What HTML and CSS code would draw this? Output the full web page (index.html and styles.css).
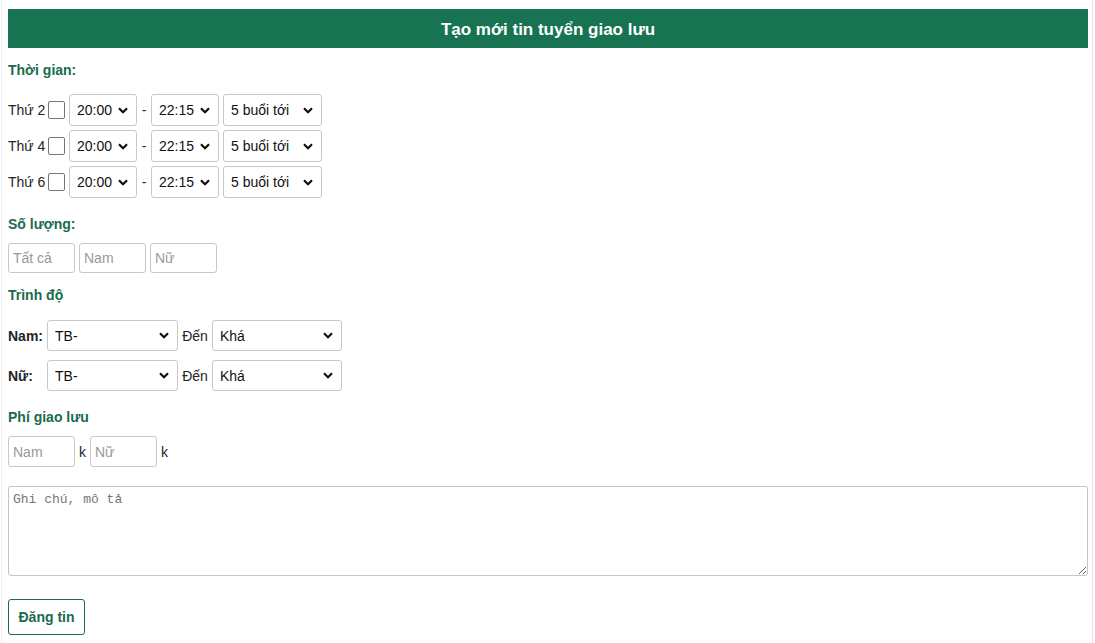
FILE: index.html
```html
<!DOCTYPE html>
<html lang="vi">
<head>
<meta charset="utf-8">
<title>Tạo mới tin tuyển giao lưu</title>
<link rel="stylesheet" href="styles.css">
</head>
<body>
<div class="frame">
  <div class="title">Tạo mới tin tuyển giao lưu</div>

  <div class="label l-time">Thời gian:</div>
  <div class="time-rows">
    <div class="time-row">
      <span class="day">Thứ 2</span><span class="check"></span>
      <select class="sel sel-time"><option>20:00</option></select>
      <span class="dash">-</span>
      <select class="sel sel-time"><option>22:15</option></select>
      <select class="sel sel-count"><option>5 buổi tới</option></select>
    </div>
    <div class="time-row">
      <span class="day">Thứ 4</span><span class="check"></span>
      <select class="sel sel-time"><option>20:00</option></select>
      <span class="dash">-</span>
      <select class="sel sel-time"><option>22:15</option></select>
      <select class="sel sel-count"><option>5 buổi tới</option></select>
    </div>
    <div class="time-row">
      <span class="day">Thứ 6</span><span class="check"></span>
      <select class="sel sel-time"><option>20:00</option></select>
      <span class="dash">-</span>
      <select class="sel sel-time"><option>22:15</option></select>
      <select class="sel sel-count"><option>5 buổi tới</option></select>
    </div>
  </div>

  <div class="label l-qty">Số lượng:</div>
  <div class="qty-row">
    <input class="inp" placeholder="Tất cả">
    <input class="inp" placeholder="Nam">
    <input class="inp" placeholder="Nữ">
  </div>

  <div class="label l-level">Trình độ</div>
  <div class="level-rows">
    <div class="level-row">
      <span class="who">Nam:</span>
      <select class="sel sel-level"><option>TB-</option></select>
      <span class="to">Đến</span>
      <select class="sel sel-level2"><option>Khá</option></select>
    </div>
    <div class="level-row">
      <span class="who">Nữ:</span>
      <select class="sel sel-level"><option>TB-</option></select>
      <span class="to">Đến</span>
      <select class="sel sel-level2"><option>Khá</option></select>
    </div>
  </div>

  <div class="label l-fee">Phí giao lưu</div>
  <div class="fee-row">
    <input class="inp fee" placeholder="Nam"><span class="k">k</span>
    <input class="inp fee" placeholder="Nữ"><span class="k">k</span>
  </div>

  <textarea class="note" placeholder="Ghi chú, mô tả"></textarea>

  <div class="actions"><button class="btn">Đăng tin</button></div>
</div>
</body>
</html>
```

FILE: styles.css
```css
* { box-sizing: border-box; }
html, body { margin: 0; padding: 0; background: #fff; }
body {
  font-family: "Liberation Sans", Arial, sans-serif;
  font-size: 14px;
  color: #212529;
}
.frame {
  margin: 0 2px 0 1px;
  border-left: 1px solid #f0f0f0;
  border-right: 1px solid #e4e4e4;
  padding: 9px 4px 0 6px;
  min-height: 643px;
  display: flex;
  flex-direction: column;
  align-items: flex-start;
}
.title {
  align-self: stretch;
  height: 39px;
  padding-top: 3px;
  background: #177352;
  color: #fff;
  font-weight: bold;
  font-size: 17px;
  display: flex;
  align-items: center;
  justify-content: center;
}
.label {
  color: #1a6b4d;
  font-weight: bold;
  font-size: 14px;
  line-height: 20px;
  height: 20px;
}
.l-time { margin-top: 12px; }
.time-rows { margin-top: 14px; display: flex; flex-direction: column; gap: 4px; }
.time-row { display: flex; align-items: center; height: 32px; }
.day { width: 40px; font-size: 14px; }
.check {
  width: 17px; height: 18px;
  border: 1px solid #767676;
  border-radius: 2px;
  background: #fff;
  margin-right: 4px;
}
.sel {
  appearance: none;
  -webkit-appearance: none;
  font-family: "Liberation Sans", Arial, sans-serif;
  font-size: 14px;
  color: #111;
  background-color: #fff;
  background-image: url("data:image/svg+xml;utf8,<svg xmlns='http://www.w3.org/2000/svg' width='10' height='7' viewBox='0 0 10 7'><path d='M1 1.3l4 4 4-4' fill='none' stroke='%23111' stroke-width='2.2'/></svg>");
  background-repeat: no-repeat;
  background-position: right 8px center;
  border: 1px solid #c8c8c8;
  border-radius: 3px;
  padding: 0 20px 0 7px;
  margin: 0;
}
.sel-time { width: 68px; height: 32px; }
.sel-count { width: 99px; height: 32px; margin-left: 4px; }
.dash { width: 14px; text-align: center; }
.l-qty { margin-top: 16px; }
.qty-row { margin-top: 9px; display: flex; gap: 4px; }
.inp {
  font-family: "Liberation Sans", Arial, sans-serif;
  font-size: 14px;
  color: #212529;
  width: 67px; height: 30px;
  border: 1px solid #c8c8c8;
  border-radius: 3px;
  padding: 0 4px;
  margin: 0;
  outline: none;
}
.inp::placeholder { color: #999; }
.l-level { margin-top: 12px; }
.level-rows { margin-top: 15px; display: flex; flex-direction: column; gap: 9px; }
.level-row { display: flex; align-items: center; height: 31px; }
.who { width: 39px; font-weight: bold; }
.sel-level { width: 131px; height: 31px; }
.sel-level2 { width: 130px; height: 31px; }
.to { width: 34px; text-align: center; }
.l-fee { margin-top: 16px; }
.fee-row { margin-top: 9px; display: flex; align-items: center; }
.fee { width: 67px; height: 31px; }
.k { width: 15px; text-align: center; }
.note {
  align-self: stretch;
  margin-top: 19px;
  height: 90px;
  border: 1px solid #c4c4c4;
  border-radius: 3px;
  padding: 5px 4px;
  font-family: "Liberation Mono", "DejaVu Sans Mono", monospace;
  font-size: 13px;
  resize: vertical;
  outline: none;
}
.note::placeholder { color: #777; }
.actions { margin-top: 23px; }
.btn {
  font-family: "Liberation Sans", Arial, sans-serif;
  font-size: 14px;
  font-weight: bold;
  color: #1a6b4d;
  background: #fff;
  border: 1px solid #1a6b4d;
  border-radius: 3px;
  width: 77px;
  height: 36px;
  padding: 0;
}
```
